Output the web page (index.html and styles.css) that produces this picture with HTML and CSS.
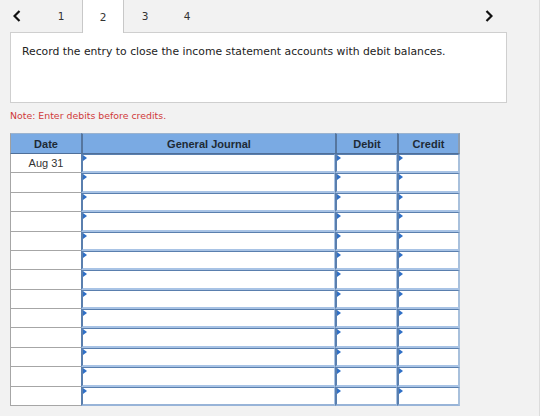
FILE: index.html
```html
<!DOCTYPE html>
<html>
<head>
<meta charset="utf-8">
<link rel="stylesheet" href="styles.css">
</head>
<body>
<div class="page">
  <div class="tabbar">
    <div class="arrow arrow-left">
      <svg width="8" height="12" viewBox="0 0 8 12"><polyline points="6.5,1 1.5,6 6.5,11" fill="none" stroke="#111" stroke-width="2.2"/></svg>
    </div>
    <div class="tab">1</div>
    <div class="tab active">2</div>
    <div class="tab">3</div>
    <div class="tab">4</div>
    <div class="spacer"></div>
    <div class="arrow arrow-right">
      <svg width="8" height="12" viewBox="0 0 8 12"><polyline points="1.5,1 6.5,6 1.5,11" fill="none" stroke="#111" stroke-width="2.2"/></svg>
    </div>
  </div>
  <div class="question">Record the entry to close the income statement accounts with debit balances.</div>
  <div class="note">Note: Enter debits before credits.</div>
  <div class="journal">
    <div class="hd hd-date">Date</div>
    <div class="hd">General Journal</div>
    <div class="hd">Debit</div>
    <div class="hd hd-last">Credit</div>

    <div class="date">Aug 31</div><div class="cell"><i></i></div><div class="cell"><i></i></div><div class="cell last"><i></i></div>
    <div class="date"></div><div class="cell"><i></i></div><div class="cell"><i></i></div><div class="cell last"><i></i></div>
    <div class="date"></div><div class="cell"><i></i></div><div class="cell"><i></i></div><div class="cell last"><i></i></div>
    <div class="date"></div><div class="cell"><i></i></div><div class="cell"><i></i></div><div class="cell last"><i></i></div>
    <div class="date"></div><div class="cell"><i></i></div><div class="cell"><i></i></div><div class="cell last"><i></i></div>
    <div class="date"></div><div class="cell"><i></i></div><div class="cell"><i></i></div><div class="cell last"><i></i></div>
    <div class="date"></div><div class="cell"><i></i></div><div class="cell"><i></i></div><div class="cell last"><i></i></div>
    <div class="date"></div><div class="cell"><i></i></div><div class="cell"><i></i></div><div class="cell last"><i></i></div>
    <div class="date"></div><div class="cell"><i></i></div><div class="cell"><i></i></div><div class="cell last"><i></i></div>
    <div class="date"></div><div class="cell"><i></i></div><div class="cell"><i></i></div><div class="cell last"><i></i></div>
    <div class="date"></div><div class="cell"><i></i></div><div class="cell"><i></i></div><div class="cell last"><i></i></div>
    <div class="date"></div><div class="cell"><i></i></div><div class="cell"><i></i></div><div class="cell last"><i></i></div>
    <div class="date"></div><div class="cell"><i></i></div><div class="cell"><i></i></div><div class="cell last"><i></i></div>
  </div>
</div>
</body>
</html>
```

FILE: styles.css
```css
html, body {
  margin: 0;
  padding: 0;
  background: #ffffff;
}
.page {
  width: 540px;
  height: 416px;
  background: #f2f2f2;
  border-right: 1px solid #dcdcdc;
  box-sizing: border-box;
  font-family: "DejaVu Sans", Verdana, sans-serif;
  overflow: hidden;
}
.tabbar {
  display: flex;
  height: 32px;
  align-items: stretch;
}
.arrow {
  display: flex;
  align-items: center;
  justify-content: center;
}
.arrow-left {
  width: 34px;
  margin-right: 6px;
}
.arrow-right {
  width: 60px;
  justify-content: flex-start;
  padding-left: 6px;
  box-sizing: border-box;
}
.spacer {
  flex: 1;
}
.tab {
  width: 42px;
  display: flex;
  align-items: center;
  justify-content: center;
  font-family: "DejaVu Sans", Verdana, sans-serif;
  font-size: 10.5px;
  color: #333;
  box-sizing: border-box;
}
.tab.active {
  background: #ffffff;
  border-left: 1px solid #c8c8c8;
  border-right: 1px solid #c8c8c8;
  height: 33px;
  margin-bottom: -1px;
  position: relative;
  z-index: 1;
}
.question {
  margin-left: 10px;
  width: 497px;
  height: 71px;
  box-sizing: border-box;
  background: #ffffff;
  border: 1px solid #cfcfcf;
  padding: 12px 0 0 11px;
  font-size: 10.8px;
  color: #222;
}
.note {
  margin: 6px 0 0 10px;
  height: 14px;
  font-size: 9.4px;
  color: #d0393a;
  line-height: 14px;
}
.journal {
  margin: 10px 0 0 10px;
  display: grid;
  grid-template-columns: 71px 254px 62px 63px;
  grid-template-rows: 21px repeat(13, 19.38px);
  width: 450px;
  font-family: "Liberation Sans", Arial, sans-serif;
}
.hd {
  background: #7aaae3;
  border-top: 1px solid #9ab3d0;
  border-left: 2px solid #56769e;
  border-bottom: 1px solid #4f6f99;
  font-size: 11px;
  font-weight: bold;
  color: #1e2a36;
  display: flex;
  align-items: center;
  justify-content: center;
  box-sizing: border-box;
}
.hd-date {
  border-left: 1px solid #a0a0a0;
}
.hd-last {
  border-right: 2px solid #8d9db0;
}
.date {
  background: #ffffff;
  border-left: 1px solid #a6a6a6;
  border-bottom: 1px solid #a6a6a6;
  box-sizing: border-box;
  font-size: 11px;
  color: #333;
  display: flex;
  align-items: center;
  justify-content: center;
}
.cell {
  background: #ffffff;
  border-left: 2px solid #5a7fae;
  border-top: 1px solid #5a7fae;
  border-bottom: 2px solid #a8c3e5;
  border-right: 1px solid #a8c3e5;
  box-sizing: border-box;
  position: relative;
}
.cell.last {
  border-right: 2px solid #a8c0dc;
}
.journal > .date:last-child,
.journal > .cell:nth-last-child(-n+3) {
  border-bottom-color: #98b4d8;
}
.cell i {
  position: absolute;
  left: 0;
  top: 0;
  width: 0;
  height: 0;
  border-top: 3px solid transparent;
  border-bottom: 3px solid transparent;
  border-left: 4px solid #2f6fc6;
}
```
